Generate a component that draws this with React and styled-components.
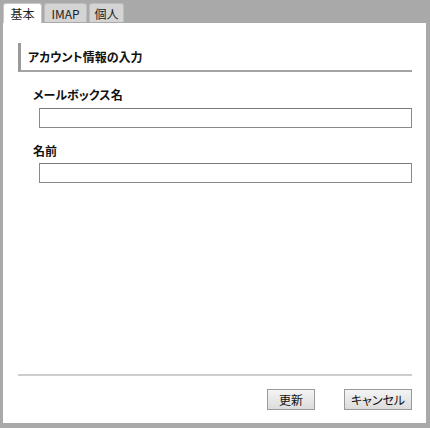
import React from "react";
import styled, { createGlobalStyle } from "styled-components";

const Global = createGlobalStyle`
  html, body { margin: 0; padding: 0; background: #ffffff; }
  body { font-family: "Noto Sans CJK JP", "Liberation Sans", sans-serif; font-size: 12px; color: #111; }
`;

const Frame = styled.div`
  width: 430px;
  height: 428px;
  box-sizing: border-box;
  background: #a9a9a9;
  display: flex;
  flex-direction: column;
  padding: 0 4px 5px 3px;
`;

const TabBar = styled.div`
  height: 23px;
  flex: none;
  display: flex;
  align-items: flex-end;
  gap: 2px;
  padding-left: 0;
`;

const Tab = styled.div`
  height: ${(p) => (p.$active ? 20 : 19)}px;
  width: ${(p) => p.$w}px;
  box-sizing: border-box;
  display: flex;
  align-items: center;
  justify-content: center;
  font-size: 12px;
  font-feature-settings: "palt";
  color: #222;
  background: ${(p) => (p.$active ? "#ffffff" : "#d4d4d4")};
  border: 1px solid ${(p) => (p.$active ? "#c8c8c8" : "#bdbdbd")};
  border-bottom: none;
  border-radius: 3px 3px 0 0;
  margin-bottom: ${(p) => (p.$active ? 0 : 1)}px;
`;

const Panel = styled.div`
  flex: 1;
  background: #ffffff;
  display: flex;
  flex-direction: column;
  padding: 20px 14px 13px 15px;
`;

const SectionHeader = styled.div`
  height: 29px;
  box-sizing: border-box;
  border-left: 3px solid #9a9a9a;
  border-bottom: 2px solid #a3a3a3;
  display: flex;
  align-items: center;
  padding-left: 7px;
  padding-bottom: 1px;
  font-size: 12px;
  font-weight: 700;
  font-feature-settings: "palt";
  color: #111;
`;

const Label = styled.div`
  height: 20px;
  line-height: 20px;
  margin-top: 13px;
  padding-left: 15px;
  font-size: 12px;
  font-weight: 700;
  font-feature-settings: "palt";
  color: #111;
`;

const Input = styled.input`
  display: block;
  box-sizing: border-box;
  height: 20px;
  margin: ${(p) => p.$gap}px 0 0 21px;
  width: 373px;
  border: 1px solid #8a8a8a;
  border-top-color: #7a7a7a;
  background: #fff;
  padding: 0 3px;
  font-size: 12px;
  outline: none;
`;

const Footer = styled.div`
  margin-top: auto;
  border-top: 2px solid #cdcdcd;
  padding-top: 13px;
  display: flex;
  justify-content: flex-end;
  gap: 29px;
`;

const Button = styled.button`
  height: 21px;
  width: ${(p) => p.$w}px;
  box-sizing: border-box;
  border: 1px solid #9a9a9a;
  border-radius: 0;
  background: linear-gradient(#f4f4f4, #dcdcdc);
  font-family: "Noto Sans CJK JP", "Liberation Sans", sans-serif;
  font-size: 12px;
  font-feature-settings: "palt";
  color: #111;
  padding: 0;
  display: flex;
  align-items: center;
  justify-content: center;
`;

export default function App() {
  return (
    <>
      <Global />
      <Frame>
        <TabBar>
          <Tab $active $w={39}>基本</Tab>
          <Tab $w={43}>IMAP</Tab>
          <Tab $w={35}>個人</Tab>
        </TabBar>
        <Panel>
          <SectionHeader>アカウント情報の入力</SectionHeader>
          <Label>メールボックス名</Label>
          <Input $gap={3} />
          <Label>名前</Label>
          <Input $gap={2} />
          <Footer>
            <Button $w={48}>更新</Button>
            <Button $w={68}>キャンセル</Button>
          </Footer>
        </Panel>
      </Frame>
    </>
  );
}
